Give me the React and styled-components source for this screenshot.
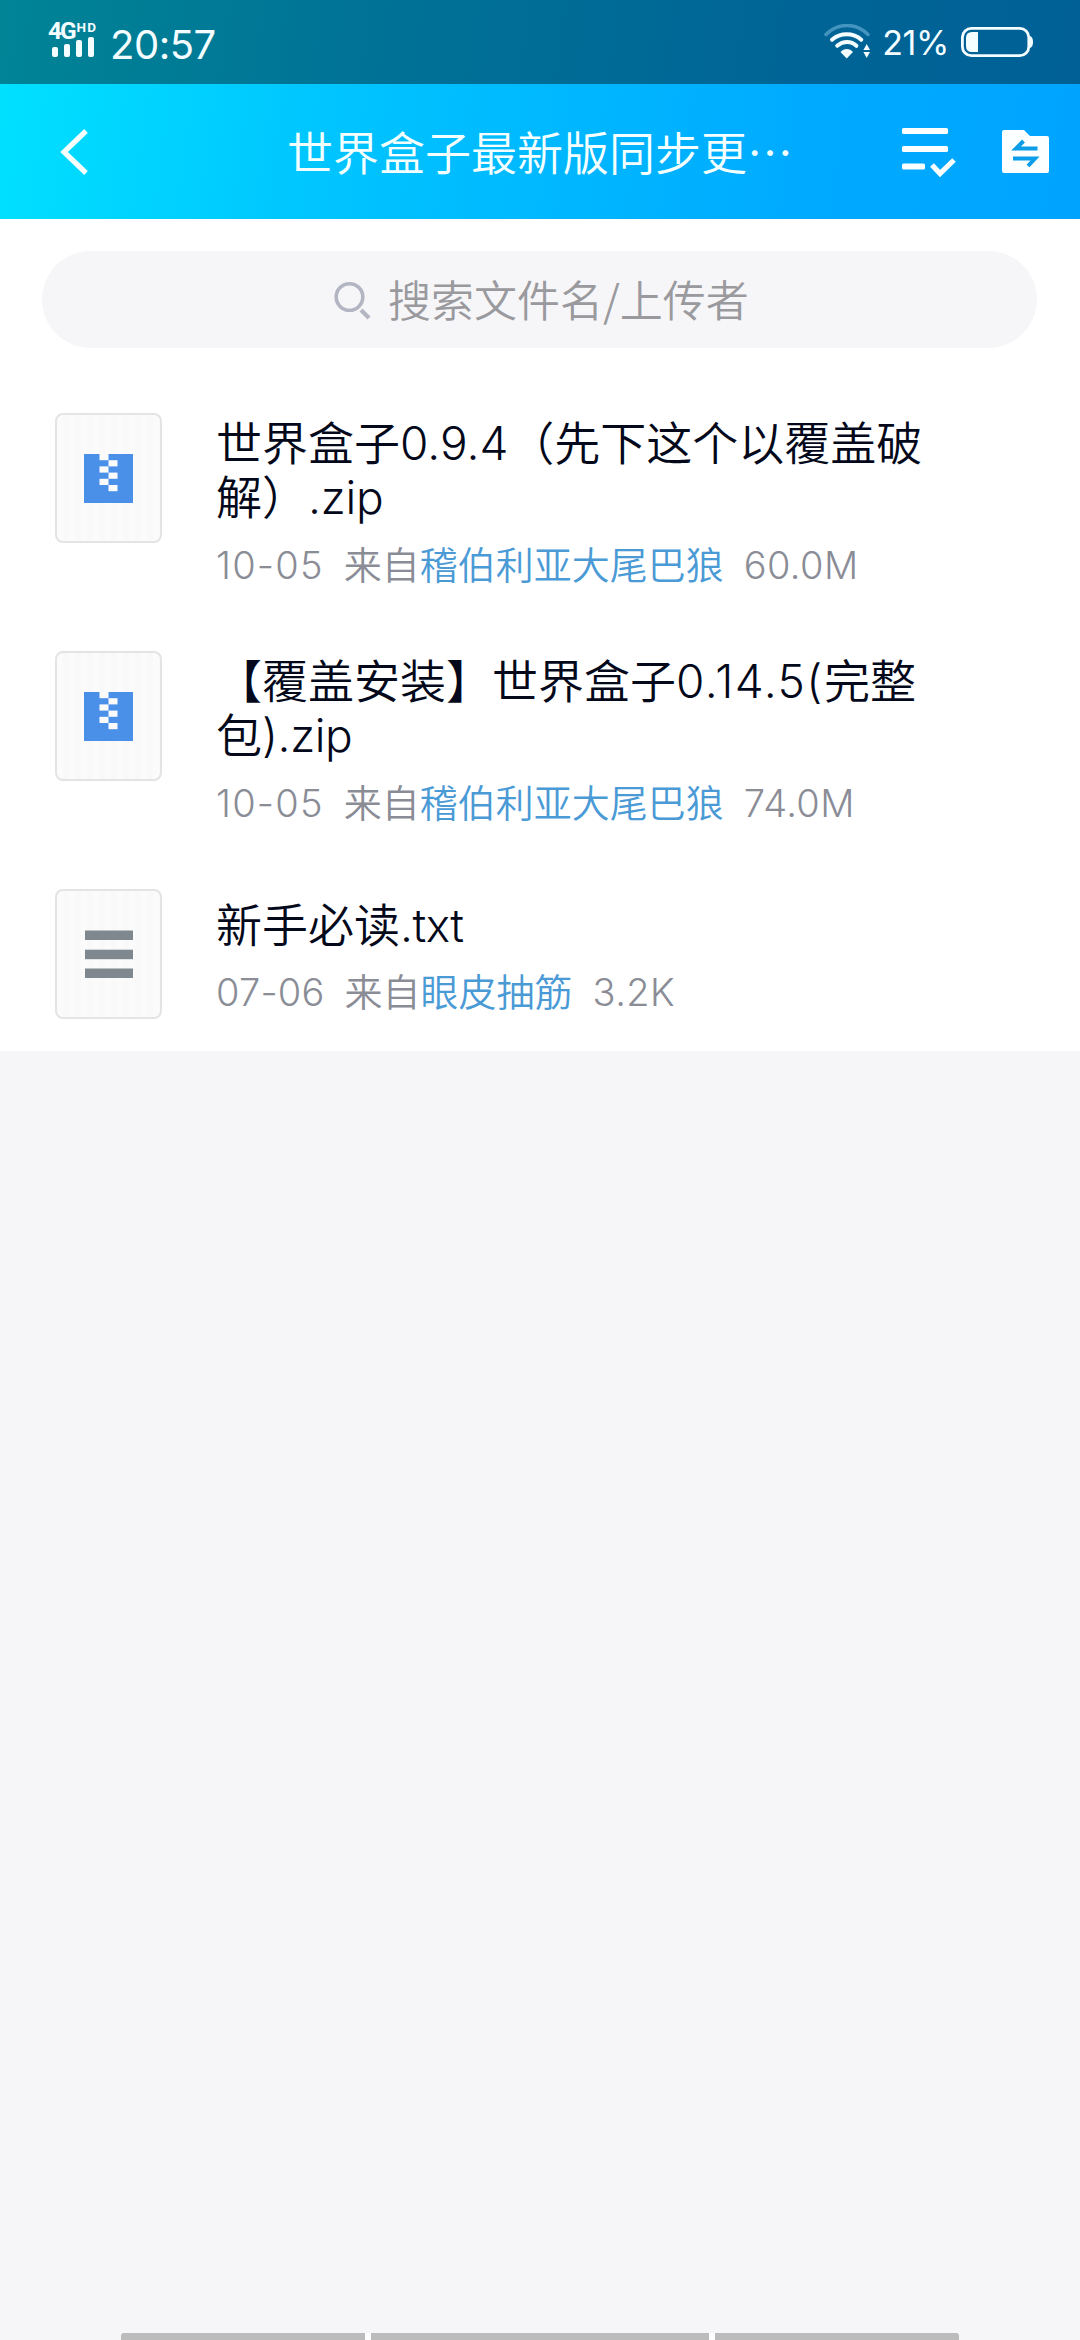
import React from "react";
import styled, { createGlobalStyle } from "styled-components";

const GlobalStyle = createGlobalStyle`
  * { box-sizing: border-box; }
  html, body { margin: 0; padding: 0; background: #f6f6f9; }
  body { font-family: "Noto Sans CJK SC DemiLight", "Noto Sans CJK SC", sans-serif; font-weight: 350; }
  svg { display: block; flex: none; }
`;

const Screen = styled.div`
  width: 1080px;
  height: 2340px;
  display: flex;
  flex-direction: column;
  background: #f6f6f9;
  overflow: hidden;
`;

const Top = styled.header`
  flex: none;
  background: linear-gradient(98deg, #00e1ff 0%, #00c3ff 33%, #00aaff 75%, #00a4ff 100%);
`;

const StatusBar = styled.div`
  height: 84px;
  display: flex;
  align-items: flex-start;
  justify-content: space-between;
  padding: 0 47px 0 48px;
  background: rgba(0, 0, 0, 0.41);
  color: #f4fdff;
`;

const StatusGroup = styled.div`
  display: flex;
  align-items: flex-start;
`;

const Network = styled.div`
  width: 50px;
  padding-top: 22px;
`;

const NetworkLabel = styled.div`
  display: flex;
  height: 18px;
  align-items: flex-start;
  font-family: Roboto, sans-serif;
  font-weight: 700;
`;

const NetworkType = styled.span`
  font-size: 24.5px;
  line-height: 18px;
  letter-spacing: -2px;
  width: 28.5px;
`;

const NetworkHd = styled.span`
  font-size: 13.5px;
  line-height: 10px;
  letter-spacing: 1.2px;
`;

const Bars = styled.div`
  display: flex;
  align-items: flex-end;
  gap: 6px;
  height: 20px;
  margin: -3px 0 0 4px;
`;

const Bar = styled.i`
  width: 6px;
  height: ${(p) => p.$h}px;
  border-radius: 2px;
  background: #f4fdff;
`;

const Clock = styled.span`
  margin: 20px 0 0 12px;
  font: 400 40px/49px Inter, sans-serif;
  letter-spacing: -0.5px;
`;

const Percent = styled.span`
  margin: 22px 12px 0 11px;
  font: 400 34px/42px Inter, sans-serif;
  letter-spacing: -0.4px;
`;

const WifiSlot = styled.div`
  padding-top: 24px;
`;

const BatterySlot = styled.div`
  padding-top: 26px;
`;

const TitleBar = styled.div`
  height: 135px;
  display: flex;
  align-items: center;
  padding: 0 31px 0 60px;
`;

const Title = styled.h1`
  margin: 0 0 3px;
  flex: 1;
  padding-left: 197px;
  font-size: 46px;
  line-height: 60px;
  font-weight: inherit;
  color: #f4ffff;
  white-space: nowrap;
`;

const Actions = styled.div`
  display: flex;
  align-items: center;
  gap: 45px;
`;

const SearchArea = styled.div`
  flex: none;
  height: 162px;
  padding: 32px 43px 33px 42px;
  background: #fff;
`;

const SearchField = styled.div`
  height: 97px;
  border-radius: 49px;
  background: #f6f6f9;
  display: flex;
  align-items: center;
  padding-left: 291px;
  gap: 16px;
  font-size: 43px;
  line-height: 60px;
  color: #9a9a9e;
`;

const Placeholder = styled.span`
  margin-bottom: 3px;
`;

const List = styled.main`
  flex: none;
  background: #fff;
  height: 670px;
`;

const Row = styled.article`
  display: flex;
  align-items: flex-start;
  height: 238px;
  padding: 32px 55px 0 55px;
`;

const Tile = styled.div`
  flex: none;
  width: 107px;
  height: 130px;
  margin-right: 54px;
  border: 2px solid #e4e4e5;
  border-radius: 8px;
  background: repeating-linear-gradient(90deg, #fbfbfb 0 6px, #f9f9f9 6px 12px);
  display: flex;
  align-items: center;
  justify-content: center;
`;

const Info = styled.div`
  padding-top: ${(p) => (p.$single ? 6 : 0)}px;
  white-space: nowrap;
`;

const FileName = styled.h2`
  margin: 0;
  font-size: 46px;
  line-height: 54px;
  font-weight: inherit;
  color: #03081a;
`;

const Line = styled.div`
  height: 54px;
`;

const Latin = styled.span`
  font-family: Inter, sans-serif;
  font-weight: 350;
  line-height: 0;
  letter-spacing: ${(p) => p.$ls || 0}px;
`;

const Meta = styled.div`
  display: flex;
  height: 48px;
  margin-top: ${(p) => (p.$single ? 17 : 18)}px;
  font-size: 38px;
  line-height: 48px;
  color: #8a8c96;
`;

const MetaLatin = styled.span`
  margin-top: 2px;
  font: 300 38px/48px Inter, sans-serif;
  letter-spacing: ${(p) => p.$ls || 0}px;
`;

const From = styled.span`
  margin: 0 20px;
`;

const Uploader = styled.span`
  color: #4a9ad6;
`;

const NavBar = styled.footer`
  margin: auto auto 0;
  width: 838px;
  height: 7px;
  flex: none;
  display: grid;
  grid-template-columns: 244px 338px 244px;
  gap: 6px;
  background: #fff;
  border-radius: 3px 3px 0 0;
  overflow: hidden;
`;

const NavSegment = styled.i`
  background: #bcbcbd;
`;

const WifiIcon = () => (
  <svg width="47" height="35" viewBox="0 0 47 35" fill="none" stroke="#f4fdff" strokeWidth="4" strokeLinecap="round">
    <path d="M2 10.5C14-1.5 32-1.5 44 10.5" stroke="#4395c0" strokeWidth="3.5" />
    <path d="M8 15.8C16.5 8.5 29 8.5 37.3 15.8" />
    <path d="M13.2 21.8C19 16.8 27 16.8 32.4 21.8" />
    <path d="M16.5 28C20 24 25.5 24 29 28L22.7 34.5Z" fill="#f4fdff" stroke="none" />
    <path d="M42.7 20L46 26H39.4ZM39.4 28H46L42.7 34Z" fill="#f4fdff" stroke="none" />
  </svg>
);

const BatteryIcon = () => (
  <svg width="72" height="32" viewBox="0 0 72 32">
    <rect x="1.4" y="2.3" width="66.4" height="27.4" rx="9" fill="none" stroke="#f4fdff" strokeWidth="2.8" />
    <path d="M17 6V26H11Q5 26 5 20V12Q5 6 11 6Z" fill="#f4fdff" />
    <path d="M69 10Q72 11 72 16Q72 21 69 22Z" fill="#f4fdff" />
  </svg>
);

const BackIcon = () => (
  <svg width="30" height="48" viewBox="0 0 30 48" fill="none" stroke="#f8ffff" strokeWidth="5.2">
    <path d="M26 3L4 24L26 45" />
  </svg>
);

const SelectIcon = () => (
  <svg width="56" height="52" viewBox="0 0 56 52">
    <g fill="#fbffff">
      <rect x="1" y="2" width="46" height="6" rx="1.5" />
      <rect x="1" y="20" width="46" height="6" rx="1.5" />
      <rect x="1" y="37.5" width="23" height="6" rx="1.5" />
    </g>
    <path d="M31 39L39 47.5L53 34" fill="none" stroke="#fbffff" strokeWidth="5.2" />
  </svg>
);

const FolderIcon = () => (
  <svg width="47" height="43" viewBox="0 0 47 43">
    <path d="M2 0H22L28 6H45Q47 6 47 8V41Q47 43 45 43H2Q0 43 0 41V2Q0 0 2 0Z" fill="#fbffff" />
    <path d="M35.5 18.5H14L21.5 11M11 28.5H33L26 36" fill="none" stroke="#0b9de8" strokeWidth="4" />
  </svg>
);

const SearchIcon = () => (
  <svg width="39" height="40" viewBox="0 0 39 40" fill="none" stroke="#b4b5c3">
    <circle cx="16.5" cy="17" r="13.3" strokeWidth="3.6" />
    <path d="M28 30L36 38" strokeWidth="4.2" />
  </svg>
);

const ZipIcon = () => (
  <svg width="49" height="49" viewBox="0 0 49 49">
    <rect width="49" height="49" fill="#4a90e9" />
    <g fill="#fbfbfb">
      <rect x="15.5" y="0" width="9" height="6.2" />
      <rect x="24.5" y="6.2" width="9" height="6.2" />
      <rect x="15.5" y="12.4" width="9" height="6.2" />
      <rect x="24.5" y="18.6" width="9" height="6.2" />
      <rect x="15.5" y="24.8" width="9" height="6.2" />
      <rect x="24.5" y="31" width="9" height="6.2" />
    </g>
  </svg>
);

const TextIcon = () => (
  <svg width="48" height="49" viewBox="0 0 48 49" fill="#7e888e">
    <rect y="0.5" width="48" height="9.5" />
    <rect y="19.7" width="48" height="9.5" />
    <rect y="38.5" width="48" height="9.5" />
  </svg>
);

const files = [
  {
    icon: ZipIcon,
    name: [
      ["世界盒子", <Latin key="v">0.9.4</Latin>, "（先下这个以覆盖破"],
      ["解）", <Latin key="e" $ls={-0.2}>.zip</Latin>],
    ],
    date: "10-05",
    dateSpacing: 1.2,
    from: "稽伯利亚大尾巴狼",
    size: "60.0M",
  },
  {
    icon: ZipIcon,
    name: [
      ["【覆盖安装】世界盒子", <Latin key="v" $ls={1.5}>0.14.5(</Latin>, "完整"],
      ["包", <Latin key="e" $ls={-0.4}>).zip</Latin>],
    ],
    date: "10-05",
    dateSpacing: 1.2,
    from: "稽伯利亚大尾巴狼",
    size: "74.0M",
  },
  {
    icon: TextIcon,
    name: [["新手必读", <Latin key="e" $ls={-0.5}>.txt</Latin>]],
    date: "07-06",
    dateSpacing: 0.2,
    from: "眼皮抽筋",
    size: "3.2K",
  },
];

export default function App() {
  return (
    <Screen>
      <GlobalStyle />
      <Top>
        <StatusBar>
          <StatusGroup>
            <Network>
              <NetworkLabel>
                <NetworkType>4G</NetworkType>
                <NetworkHd>HD</NetworkHd>
              </NetworkLabel>
              <Bars>
                {[10, 13, 17, 20].map((h) => (
                  <Bar key={h} $h={h} />
                ))}
              </Bars>
            </Network>
            <Clock>20:57</Clock>
          </StatusGroup>
          <StatusGroup>
            <WifiSlot><WifiIcon /></WifiSlot>
            <Percent>21%</Percent>
            <BatterySlot><BatteryIcon /></BatterySlot>
          </StatusGroup>
        </StatusBar>
        <TitleBar>
          <BackIcon />
          <Title>世界盒子最新版同步更⋯</Title>
          <Actions>
            <SelectIcon />
            <FolderIcon />
          </Actions>
        </TitleBar>
      </Top>
      <SearchArea>
        <SearchField>
          <SearchIcon />
          <Placeholder>搜索文件名/上传者</Placeholder>
        </SearchField>
      </SearchArea>
      <List>
        {files.map(({ icon: Icon, name, date, dateSpacing, from, size }) => (
          <Row key={size}>
            <Tile><Icon /></Tile>
            <Info $single={name.length === 1}>
              <FileName>
                {name.map((line, i) => (
                  <Line key={i}>{line}</Line>
                ))}
              </FileName>
              <Meta $single={name.length === 1}>
                <MetaLatin $ls={dateSpacing}>{date}</MetaLatin>
                <From>来自<Uploader>{from}</Uploader></From>
                <MetaLatin $ls={0.4}>{size}</MetaLatin>
              </Meta>
            </Info>
          </Row>
        ))}
      </List>
      <NavBar>
        <NavSegment />
        <NavSegment />
        <NavSegment />
      </NavBar>
    </Screen>
  );
}
